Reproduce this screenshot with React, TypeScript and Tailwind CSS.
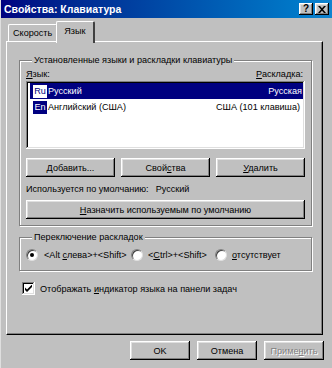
import React from 'react';

// classic 3d bevels
const raised =
  'bg-[#c0c0c0] shadow-[inset_-1px_-1px_0_#000,inset_1px_1px_0_#fff,inset_-2px_-2px_0_#808080,inset_2px_2px_0_#dfdfdf]';
const sunken =
  'shadow-[inset_-1px_-1px_0_#fff,inset_1px_1px_0_#808080,inset_-2px_-2px_0_#dfdfdf,inset_2px_2px_0_#000]';

const U: React.FC<{ children: React.ReactNode }> = ({ children }) => <span className="underline underline-offset-[1px]">{children}</span>;

const Button: React.FC<{ className?: string; disabled?: boolean; children: React.ReactNode }> = ({ className = '', disabled, children }) => (
  <div
    className={`${raised} flex items-center justify-center h-[19px] whitespace-nowrap ${disabled ? 'text-[#808080] [text-shadow:1px_1px_0_#fff]' : ''} ${className}`}
  >
    {children}
  </div>
);

const Radio: React.FC<{ checked?: boolean }> = ({ checked }) => (
  <div className="w-[12px] h-[12px] rounded-full bg-white border border-t-[#808080] border-l-[#808080] border-r-[#dfdfdf] border-b-[#dfdfdf] shadow-[inset_1px_1px_0_#404040] flex items-center justify-center shrink-0">
    {checked && <div className="w-[4px] h-[4px] rounded-full bg-black" />}
  </div>
);

const GroupBox: React.FC<{ title: string; className?: string; children: React.ReactNode }> = ({ title, className = '', children }) => (
  <fieldset className={`border border-[#808080] shadow-[inset_1px_1px_0_#fff,1px_1px_0_#fff] ${className}`}>
    <legend className="ml-[6px] px-[2px] bg-[#c0c0c0] leading-[12px]">{title}</legend>
    {children}
  </fieldset>
);

const App: React.FC = () => {
  return (
    <div className="w-[332px] h-[368px] bg-[#c0c0c0] flex flex-col overflow-hidden border-l border-[#dfdfdf] text-[9.1px] text-black font-['Liberation_Sans',Arial,sans-serif] leading-[12px]">
      {/* title bar */}
      <div className="h-[18px] flex items-center pl-[3px] pr-[3px] bg-gradient-to-r from-[#000080] to-[#1084d0]">
        <span className="text-white font-bold text-[10.5px]">Свойства: Клавиатура</span>
        <div className="ml-auto flex gap-[2px]">
          <div className={`${raised} w-[14px] h-[12px] flex items-center justify-center font-bold text-[10px] leading-none`}>?</div>
          <div className={`${raised} w-[14px] h-[12px] flex items-center justify-center`}>
            <svg width="8" height="7" viewBox="0 0 8 7">
              <path d="M0 0h2l2 2.2L6 0h2L5 3.5 8 7H6L4 4.8 2 7H0l3-3.5z" fill="#000" />
            </svg>
          </div>
        </div>
      </div>

      {/* tabs */}
      <div className="h-[23px] flex items-end pl-[7px]">
        <div className="h-[17px] px-[4px] flex items-center border-t border-l border-white border-r border-r-[#404040] rounded-tl-[2px] rounded-tr-[2px] bg-[#c0c0c0]">
          Скорость
        </div>
        <div className="relative z-10 -mb-[2px] -ml-[1px] h-[22px] px-[7px] pb-[3px] flex items-center border-t border-l border-white border-r-2 border-r-[#404040] rounded-tl-[2px] rounded-tr-[2px] bg-[#c0c0c0]">
          Язык
        </div>
      </div>

      {/* tab panel */}
      <div className="ml-[5px] mr-[9px] h-[294px] border-t border-l border-white border-r border-b border-r-black border-b-black shadow-[inset_-1px_-1px_0_#808080] pl-[12px] pr-[10px] pt-[12px] flex flex-col">
        <GroupBox title="Установленные языки и раскладки клавиатуры" className="px-[6px] pb-[6px]">
          <div className="flex justify-between h-[14px] items-center mt-[1px] pr-[2px]">
            <span>
              <U>Я</U>зык:
            </span>
            <span>
              <U>Р</U>аскладка:
            </span>
          </div>
          <div className={`${sunken} bg-white h-[68px] pt-[2px] px-[2px]`}>
            <div className="h-[16px] flex items-center bg-[#000080] text-white ml-[2px] pl-[3px] pr-[1px]">
              <span className="w-[14px] h-[13px] bg-white text-[#000080] flex items-center justify-center">Ru</span>
              <span className="ml-[1px]">Русский</span>
              <span className="ml-auto">Русская</span>
            </div>
            <div className="h-[16px] flex items-center ml-[2px] pl-[3px] pr-[3px]">
              <span className="w-[14px] h-[13px] bg-[#000080] text-white flex items-center justify-center">En</span>
              <span className="ml-[1px]">Английский (США)</span>
              <span className="ml-auto">США (101 клавиша)</span>
            </div>
          </div>
          <div className="flex gap-[6px] mt-[9px]">
            <Button className="flex-1">
              <span>
                <U>Д</U>обавить...
              </span>
            </Button>
            <Button className="flex-1">
              <span>
                Свой<U>с</U>тва
              </span>
            </Button>
            <Button className="flex-1">
              <span>
                <U>У</U>далить
              </span>
            </Button>
          </div>
          <div className="h-[12px] mt-[6px] flex items-center">
            <span>Используется по умолчанию:</span>
            <span className="ml-[7px]">Русский</span>
          </div>
          <Button className="mt-[5px]">
            <span>
              <U>Н</U>азначить используемым по умолчанию
            </span>
          </Button>
        </GroupBox>

        <GroupBox title="Переключение раскладок" className="mt-[5px] h-[40px] px-[6px]">
          <div className="flex items-center h-[22px] mt-[1px] whitespace-nowrap">
            <div className="w-[105px] flex items-center">
              <Radio checked />
              <span className="ml-[6px]">
                &lt;Alt <U>с</U>лева&gt;+&lt;Shift&gt;
              </span>
            </div>
            <div className="w-[84px] flex items-center">
              <Radio />
              <span className="ml-[5px]">
                &lt;<U>C</U>trl&gt;+&lt;Shift&gt;
              </span>
            </div>
            <div className="flex items-center">
              <Radio />
              <span className="ml-[5px]">
                <U>о</U>тсутствует
              </span>
            </div>
          </div>
        </GroupBox>

        <div className="flex items-center mt-[11px] ml-[3px]">
          <div className={`${sunken} bg-white w-[13px] h-[13px] flex items-center justify-center shrink-0`}>
            <svg width="7" height="7" viewBox="0 0 7 7">
              <path d="M0 2.5L2 4.5 7 -0.5V2L2 7 0 5z" fill="#000" />
            </svg>
          </div>
          <span className="ml-[5px]">
            Отображать <U>и</U>ндикатор языка на панели задач
          </span>
        </div>
      </div>

      {/* footer buttons */}
      <div className="flex justify-end gap-[7px] pr-[8px] mt-[6px]">
        <Button className="w-[60px]">OK</Button>
        <Button className="w-[60px]">Отмена</Button>
        <Button className="w-[60px]" disabled>
          <span>
            Приме<U>н</U>ить
          </span>
        </Button>
      </div>
    </div>
  );
};

export default App;
